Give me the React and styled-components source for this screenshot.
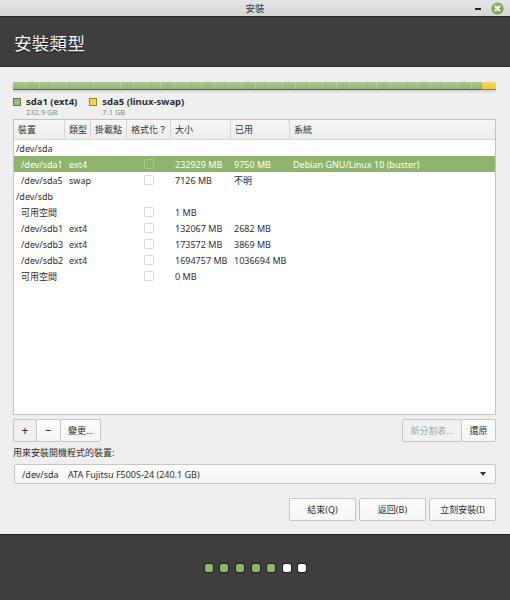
import React from "react";
import styled, { createGlobalStyle } from "styled-components";

const Global = createGlobalStyle`
  html, body { margin: 0; padding: 0; height: 600px; overflow: hidden; }
  body { font-family: "Noto Sans", "Noto Sans CJK TC", sans-serif; background: #efefef; }
  #root { height: 600px; }
  * { box-sizing: border-box; }
`;

const Window = styled.div`
  width: 510px;
  height: 600px;
  display: flex;
  flex-direction: column;
  background: #efefef;
`;

const TitleBar = styled.div`
  height: 17px;
  flex: none;
  background: linear-gradient(#e4e4e4, #d6d6d6);
  border-bottom: 1px solid #262626;
  display: flex;
  align-items: center;
  justify-content: center;
  position: relative;
  font-size: 9.5px;
  color: #3a3a3a;
`;

const WinControls = styled.div`
  position: absolute;
  right: 6px;
  top: 2px;
  display: flex;
  align-items: center;
  gap: 10px;
`;

const MinIcon = styled.span`
  width: 6px;
  height: 2px;
  background: #222;
  display: block;
`;

const Header = styled.div`
  height: 50px;
  flex: none;
  background: #3e3e3e;
  border-bottom: 1px solid #2c2c2c;
  display: flex;
  align-items: center;
  padding: 2px 0 0 14px;
  font-size: 17.5px;
  color: #f2f2f2;
  text-shadow: 0 1px 1px rgba(0, 0, 0, 0.6);
  letter-spacing: 0.3px;
`;

const Body = styled.div`
  flex: 1;
  min-height: 0;
  display: flex;
  flex-direction: column;
  padding: 15px 14px 13px 13px;
`;

const Bar = styled.div`
  height: 8px;
  display: flex;
  flex: none;
  box-shadow: 0 2px 2px rgba(0, 0, 0, 0.12);
`;

const Segment = styled.div`
  height: 100%;
  background:
    repeating-linear-gradient(to right, transparent 0, transparent 12.5px, rgba(255,255,255,0.22) 12.5px, rgba(255,255,255,0.22) 13.5px),
    linear-gradient(${(p) => p.$top}, ${(p) => p.$bottom});
  border-bottom: 1.5px solid ${(p) => p.$edge};
`;

const Legend = styled.div`
  display: flex;
  gap: 12px;
  margin-top: 6px;
  height: 21px;
  flex: none;
`;

const LegendItem = styled.div`
  display: flex;
  gap: 5px;
`;

const Swatch = styled.span`
  width: 8px;
  height: 8px;
  margin-top: 2px;
  flex: none;
  background: ${(p) => p.$color};
  border: 1px solid ${(p) => p.$border};
`;

const LegendText = styled.div`
  display: flex;
  flex-direction: column;
`;

const LegendName = styled.span`
  font-size: 9.5px;
  font-weight: 700;
  line-height: 12px;
  color: #2e2e2e;
`;

const LegendSize = styled.span`
  font-size: 7.5px;
  line-height: 9px;
  color: #8a8a8a;
`;

const Table = styled.div`
  flex: 1;
  min-height: 0;
  margin-top: 2px;
  border: 1px solid #c3c3c3;
  background: #fff;
  display: flex;
  flex-direction: column;
`;

const cols = "51px 26px 36px 44px 60px 59px 1fr";

const HeadRow = styled.div`
  display: grid;
  grid-template-columns: ${cols};
  height: 20px;
  background: linear-gradient(#f6f6f6, #ededed);
  border-bottom: 1px solid #d6d6d6;
  flex: none;
`;

const HeadCell = styled.div`
  display: flex;
  align-items: center;
  padding-left: 4px;
  font-size: 9px;
  color: #333;
  border-right: ${(p) => (p.$last ? "none" : "1px solid #d4d4d4")};
`;

const Row = styled.div`
  display: grid;
  grid-template-columns: ${cols};
  height: 16px;
  align-items: center;
  font-size: 9px;
  color: ${(p) => (p.$selected ? "#fff" : "#2e2e2e")};
  background: ${(p) => (p.$selected ? "#8fb46d" : "transparent")};
`;

const Cell = styled.div`
  padding-left: ${(p) => p.$pad ?? 4}px;
  white-space: nowrap;
  display: flex;
  justify-content: ${(p) => (p.$center ? "center" : "flex-start")};
  ${(p) => (p.$span ? `grid-column: span ${p.$span};` : "")}
`;

const Check = styled.span`
  width: 10px;
  height: 10px;
  border: 1px solid ${(p) => (p.$selected ? "#a9c58e" : "#dadada")};
  border-radius: 1.5px;
  background: ${(p) => (p.$selected ? "#8fb46d" : "#fff")};
  margin-left: -4px;
`;

const ButtonRow = styled.div`
  display: flex;
  justify-content: space-between;
  margin-top: 4px;
  height: 23px;
  flex: none;
`;

const Group = styled.div`
  display: flex;
`;

const Btn = styled.button`
  height: 23px;
  min-width: ${(p) => p.$w || 0}px;
  padding: 0 6px;
  font-family: inherit;
  font-size: ${(p) => p.$fs || 9}px;
  color: ${(p) => (p.$disabled ? "#a6a6a6" : "#2e2e2e")};
  background: ${(p) => (p.$dim ? "#f1f1f1" : "linear-gradient(#fcfcfc, #f6f6f6)")};
  border: 1px solid #c6c6c6;
  border-radius: 2px;
  display: flex;
  align-items: center;
  justify-content: center;
  & + & {
    margin-left: -1px;
  }
`;

const Label = styled.div`
  margin-top: 5px;
  height: 12px;
  font-size: 9px;
  line-height: 12px;
  color: #2e2e2e;
  flex: none;
`;

const Select = styled.div`
  margin-top: 5px;
  height: 20px;
  flex: none;
  margin-left: 1px;
  border: 1px solid #c6c6c6;
  border-radius: 2px;
  background: linear-gradient(#fcfcfc, #f6f6f6);
  display: flex;
  align-items: center;
  justify-content: space-between;
  padding: 0 9px 0 7px;
  font-size: 9px;
  color: #2e2e2e;
  white-space: pre;
`;

const Arrow = styled.span`
  width: 0;
  height: 0;
  border-left: 3.5px solid transparent;
  border-right: 3.5px solid transparent;
  border-top: 4px solid #333;
`;

const Actions = styled.div`
  display: flex;
  justify-content: flex-end;
  gap: 4px;
  margin-top: 14px;
  flex: none;
`;

const ActionBtn = styled(Btn)`
  width: 67px;
`;

const Footer = styled.div`
  height: 66px;
  flex: none;
  background: #3e3e3e;
  border-top: 1.5px solid #1e1e1e;
  display: flex;
  align-items: center;
  justify-content: center;
  gap: 7.6px;
  padding-left: 1px;
`;

const Dot = styled.span`
  width: 8px;
  height: 8px;
  border-radius: 2px;
  background: ${(p) => (p.$done ? "#8db56b" : "#ffffff")};
  box-shadow: 0 0 0 1px #222;
`;

const rows = [
  { dev: "/dev/sda", top: true },
  { dev: "/dev/sda1", type: "ext4", size: "232929 MB", used: "9750 MB", sys: "Debian GNU/Linux 10 (buster)", selected: true },
  { dev: "/dev/sda5", type: "swap", size: "7126 MB", used: "不明" },
  { dev: "/dev/sdb", top: true },
  { dev: "可用空間", size: "1 MB" },
  { dev: "/dev/sdb1", type: "ext4", size: "132067 MB", used: "2682 MB" },
  { dev: "/dev/sdb3", type: "ext4", size: "173572 MB", used: "3869 MB" },
  { dev: "/dev/sdb2", type: "ext4", size: "1694757 MB", used: "1036694 MB" },
  { dev: "可用空間", size: "0 MB" },
];

const headers = ["裝置", "類型", "掛載點", "格式化？", "大小", "已用", "系統"];

export default function App() {
  return (
    <Window>
      <Global />
      <TitleBar>
        安裝
        <WinControls>
          <MinIcon />
          <svg width="13" height="13" viewBox="0 0 13 13">
            <defs>
              <radialGradient id="cg" cx="45%" cy="40%" r="60%">
                <stop offset="0" stopColor="#9cc874" />
                <stop offset="1" stopColor="#6e9d4a" />
              </radialGradient>
            </defs>
            <circle cx="6.5" cy="6.5" r="6" fill="url(#cg)" />
            <path d="M4.4 4.4 L8.6 8.6 M8.6 4.4 L4.4 8.6" stroke="#fff" strokeWidth="1.8" strokeLinecap="round" />
          </svg>
        </WinControls>
      </TitleBar>
      <Header>安裝類型</Header>
      <Body>
        <Bar>
          <Segment style={{ flex: 232929 }} $top="#aac78f" $bottom="#93b279" $edge="#55693f" />
          <Segment style={{ flex: 7126 }} $top="#f6d861" $bottom="#e9c53c" $edge="#9a8122" />
        </Bar>
        <Legend>
          <LegendItem>
            <Swatch $color="#9cbc80" $border="#5f7b47" />
            <LegendText>
              <LegendName>sda1 (ext4)</LegendName>
              <LegendSize>232.9 GB</LegendSize>
            </LegendText>
          </LegendItem>
          <LegendItem>
            <Swatch $color="#f4d44c" $border="#9c8420" />
            <LegendText>
              <LegendName>sda5 (linux-swap)</LegendName>
              <LegendSize>7.1 GB</LegendSize>
            </LegendText>
          </LegendItem>
        </Legend>
        <Table>
          <HeadRow>
            {headers.map((h, i) => (
              <HeadCell key={h} $last={i === headers.length - 1}>{h}</HeadCell>
            ))}
          </HeadRow>
          {rows.map((r, i) =>
            r.top ? (
              <Row key={i}>
                <Cell $pad={2} $span={7}>{r.dev}</Cell>
              </Row>
            ) : (
              <Row key={i} $selected={r.selected}>
                <Cell $pad={7}>{r.dev}</Cell>
                <Cell>{r.type}</Cell>
                <Cell />
                <Cell $center>
                  <Check $selected={r.selected} />
                </Cell>
                <Cell>{r.size}</Cell>
                <Cell $pad={3}>{r.used}</Cell>
                <Cell $pad={3}>{r.sys}</Cell>
              </Row>
            )
          )}
        </Table>
        <ButtonRow>
          <Group>
            <Btn $w={24} $fs={12} $dim>+</Btn>
            <Btn $w={25} $fs={12}>−</Btn>
            <Btn $w={41}>變更...</Btn>
          </Group>
          <Group>
            <Btn $w={60} $disabled $dim>新分割表...</Btn>
            <Btn $w={35}>還原</Btn>
          </Group>
        </ButtonRow>
        <Label>用來安裝開機程式的裝置:</Label>
        <Select>
          <span>{"/dev/sda    ATA Fujitsu F500S-24 (240.1 GB)"}</span>
          <Arrow />
        </Select>
        <Actions>
          <ActionBtn>結束(Q)</ActionBtn>
          <ActionBtn>返回(B)</ActionBtn>
          <ActionBtn>立刻安裝(I)</ActionBtn>
        </Actions>
      </Body>
      <Footer>
        {[1, 1, 1, 1, 1, 0, 0].map((d, i) => (
          <Dot key={i} $done={d} />
        ))}
      </Footer>
    </Window>
  );
}
